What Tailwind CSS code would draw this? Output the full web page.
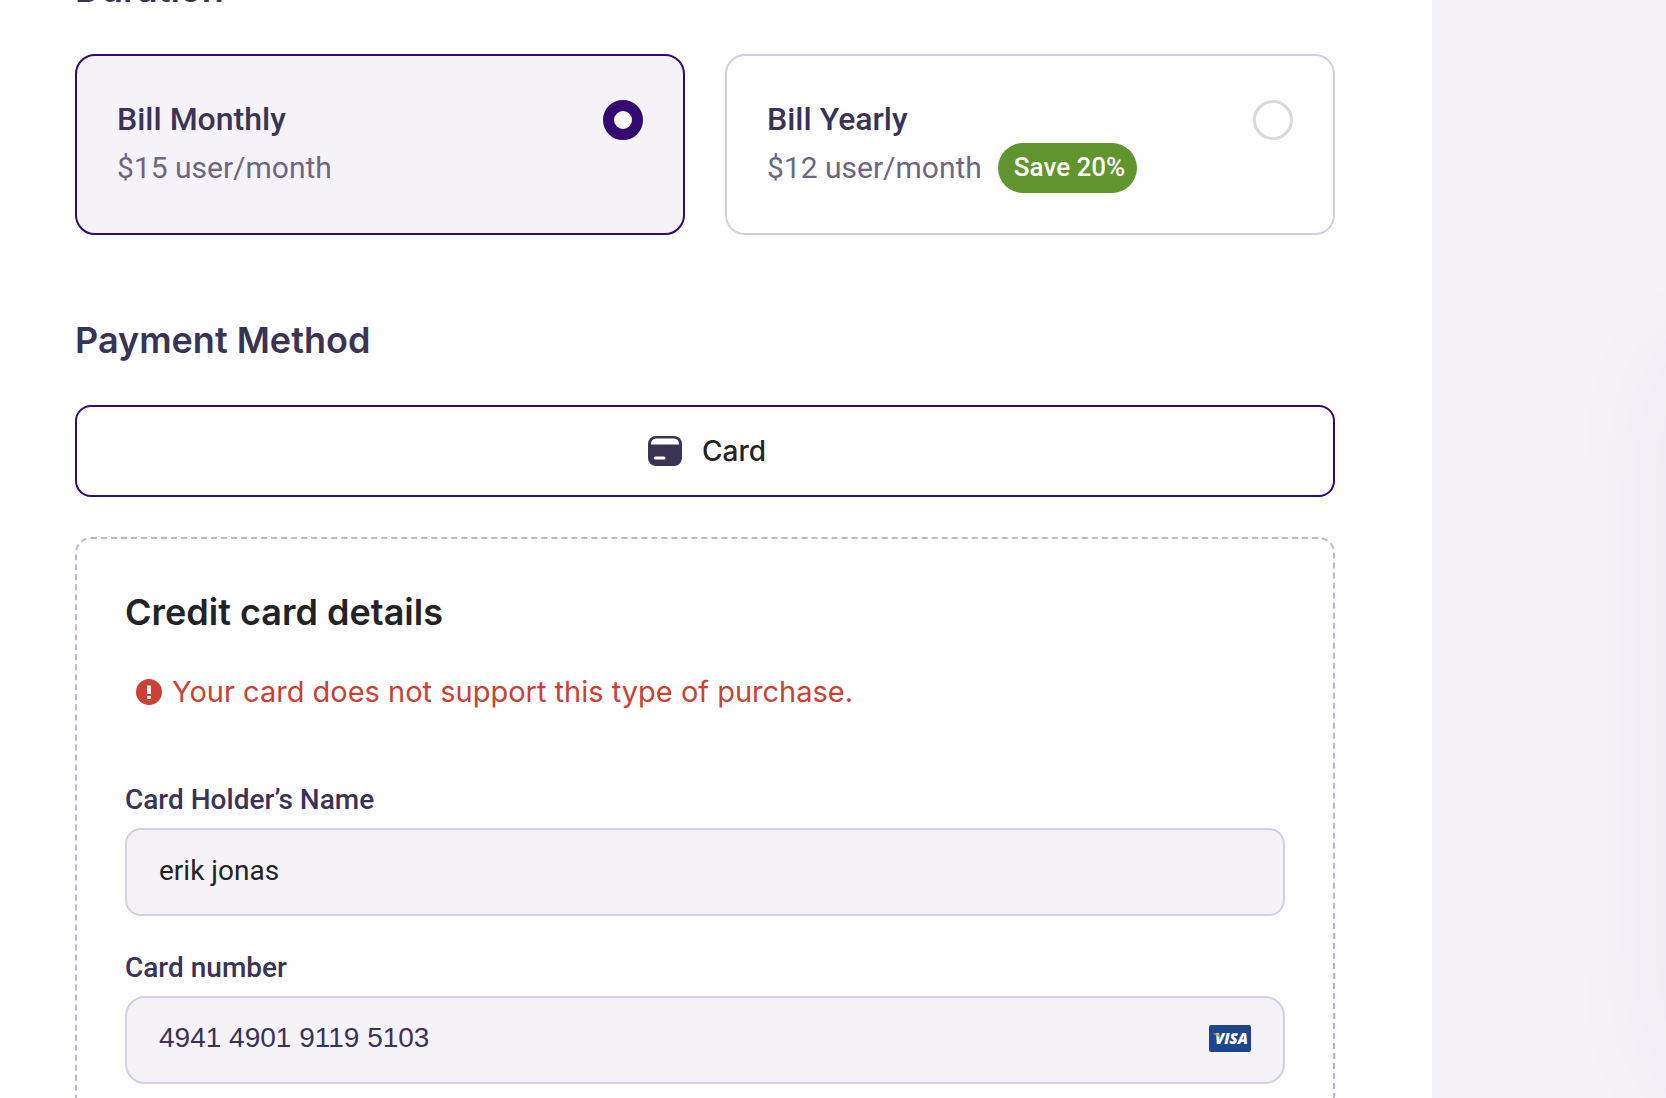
<!DOCTYPE html>
<html lang="en">
<head>
  <meta charset="UTF-8" />
  <meta name="viewport" content="width=device-width, initial-scale=1.0"/>
  <title>Checkout</title>
  <script src="https://cdn.jsdelivr.net/npm/@tailwindcss/browser@4"></script>
</head>
<body class="bg-[#f5f3f8] font-[Roboto,sans-serif] text-[#3b3355]">

  <div class="flex h-screen overflow-hidden">

    <!-- Main Content -->
    <main class="flex-1 min-w-0 -mt-9 pl-[75px] pr-[97px] bg-white self-start">

      <!-- Duration -->
      <h2 class="mb-10 font-[Inter,sans-serif] text-[36px] leading-[50px] font-semibold">Duration</h2>
      <div class="grid grid-cols-2 gap-10">
        <label for="monthly" class="flex justify-between items-start p-10 border-2 border-[#320a70] rounded-[20px] bg-[#f5f3f8]">
          <span class="block">
            <span class="block text-[32px] leading-[46px] font-medium">Bill Monthly</span>
            <span class="flex items-center h-[51px] text-[30px] text-[#6d6681]">$15 user/month</span>
          </span>
          <input type="radio" id="monthly" name="duration" checked class="appearance-none size-10 mt-1 rounded-full border-3 border-[#dadada] checked:border-[11px] checked:border-[#320a70] bg-white" />
        </label>
        <label for="yearly" class="flex justify-between items-start p-10 border-2 border-[#d5cee3] rounded-[20px]">
          <span class="block">
            <span class="block text-[32px] leading-[46px] font-medium">Bill Yearly</span>
            <span class="flex items-center gap-4 h-[51px] text-[30px] text-[#6d6681]">
              $12 user/month
              <span class="pl-4 pr-3 h-[50px] rounded-full bg-[#5f942e] text-[26px] leading-[48px] font-medium text-white">Save 20%</span>
            </span>
          </span>
          <input type="radio" id="yearly" name="duration" class="appearance-none size-10 mt-1 rounded-full border-3 border-[#dadada] checked:border-[11px] checked:border-[#320a70] bg-white" />
        </label>
      </div>

      <!-- Payment Method -->
      <h2 class="mt-20 mb-10 font-[Inter,sans-serif] text-[36px] leading-[50px] font-semibold">Payment Method</h2>
      <button type="button" class="flex w-full h-[92px] items-center justify-center gap-5 pl-1 border-2 border-[#320a70] rounded-2xl font-[Inter,sans-serif] text-[28px] font-medium text-[#232323]">
        <svg class="w-[34px] h-[30px]" viewBox="0 0 34 30" aria-hidden="true">
          <rect width="34" height="30" rx="8" fill="#3b3355"/>
          <path d="M3 8.500C3 4.500 5 2.500 9 2.500H25C29 2.500 31 4.500 31 8.500Z" fill="#fff"/>
          <path d="M7.500 22H16" stroke="#fff" stroke-width="3" stroke-linecap="round"/>
        </svg>
        Card
      </button>

      <!-- Credit card form -->
      <form class="mt-10 px-12 pt-12 pb-20 border-2 border-dashed border-[#bfb3d6] rounded-2xl">
        <h3 class="font-[Inter,sans-serif] text-[36px] leading-[50px] font-semibold text-[#232323]">Credit card details</h3>
        <p class="flex items-center gap-2.5 mt-[35px] ml-[11px] font-[Inter,sans-serif] text-[29px] leading-10 text-[#ca4135]" role="alert">
          <svg class="size-[26px]" viewBox="0 0 26 26" aria-hidden="true">
            <circle cx="13" cy="13" r="13" fill="#ca4135"/>
            <path d="M11.200 6.500H14.800V15H11.200ZM11.200 17H14.800V20H11.200Z" fill="#fff"/>
          </svg>
          Your card does not support this type of purchase.
        </p>

        <label for="cardName" class="block mt-[68px] mb-2 text-[28px] leading-10 font-medium">Card Holder’s Name</label>
        <input type="text" id="cardName" value="erik jonas" class="block w-full h-[88px] px-8 pb-1 border-2 border-[#d5cee3] rounded-2xl bg-[#f5f3f8] text-[28px] text-[#232323]" />

        <label for="cardNumber" class="block mt-8 mb-2 text-[28px] leading-10 font-medium">Card number</label>
        <div class="flex items-center h-[88px] px-8 pb-1 border-2 border-[#d5cee3] rounded-[20px] bg-[#f5f3f8]">
          <input type="text" id="cardNumber" inputmode="numeric" value="4941 4901 9119 5103" class="flex-1 min-w-0 bg-transparent font-['Liberation_Sans',sans-serif] text-[28px]" />
          <svg class="w-[42px] h-[27px]" viewBox="0 0 42 27" aria-label="Visa">
            <rect width="42" height="27" rx="2" fill="#1d468f"/>
            <text x="6" y="19" fill="#fff" font-family="Open Sans, sans-serif" font-size="15" font-weight="800" font-style="italic">VISA</text>
            <path d="M3.500 8.500H8.500C9.500 8.500 10 9 10.200 10L11 14C9.800 11.500 7 9.500 3.500 8.500Z" fill="#e3a13a"/>
          </svg>
        </div>
      </form>
    </main>

    <!-- Summary, its card starts past the right edge -->
    <aside class="w-[234px] shrink-0 pt-[350px]">
      <div class="ml-[240px] w-[600px] h-[735px] rounded-[20px] bg-white shadow-[0_0_120px_rgba(50,10,90,0.06)]"></div>
    </aside>

  </div>

</body>
</html>
